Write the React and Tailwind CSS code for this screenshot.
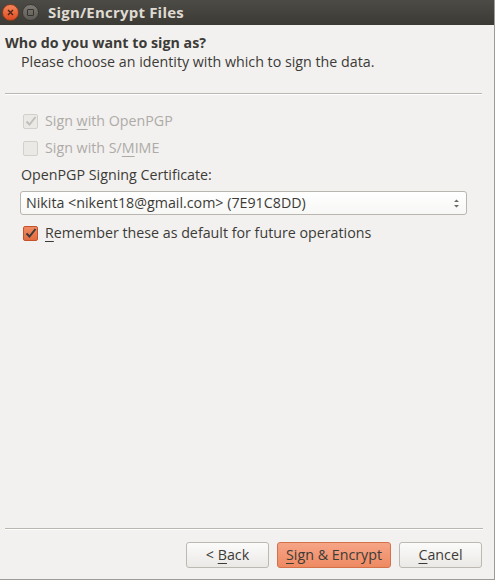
import React from 'react';

const U = ({ children }) => <span className="underline underline-offset-[3px] decoration-1">{children}</span>;

const Check = ({ checked, disabled, orange }) => {
  if (orange) {
    return (
      <div className="w-[15px] h-[15px] rounded-[2px] border border-[#c4532c] bg-gradient-to-b from-[#f08a62] to-[#e16c40] flex items-center justify-center">
        <svg width="13" height="13" viewBox="0 0 13 13">
          <path d="M2.5 6.5 L5.5 9.5 L11.5 2" fill="none" stroke="#3c3b37" strokeWidth="2" />
        </svg>
      </div>
    );
  }
  return (
    <div className="w-[15px] h-[15px] rounded-[2px] border border-[#d3d0cb] bg-[#ebe9e6] flex items-center justify-center">
      {checked && (
        <svg width="13" height="13" viewBox="0 0 13 13">
          <path d="M2.5 6.5 L5.5 9.5 L11.5 2" fill="none" stroke="#c2bfba" strokeWidth="2" />
        </svg>
      )}
    </div>
  );
};

const Button = ({ children, primary, className }) => (
  <button
    className={`h-[26px] rounded-[3px] border text-[14.25px] ${
      primary
        ? 'border-[#d2714a] bg-gradient-to-b from-[#f6a487] to-[#ee8a62] text-[#3c3b37]'
        : 'border-[#bcb8b2] bg-gradient-to-b from-[#fbfbfa] to-[#ebe9e6] text-[#3c3b37]'
    } ${className}`}
  >
    {children}
  </button>
);

export default function App() {
  return (
    <div
      className="w-[495px] h-[580px] bg-[#f2f1f0] flex flex-col border-r border-b border-[#9e9b96] text-[#3c3b37]"
      style={{ fontFamily: '"Open Sans", "Noto Sans", sans-serif' }}
    >
      {/* title bar */}
      <div className="h-[25px] shrink-0 bg-gradient-to-b from-[#4d4b45] to-[#3b3a35] flex items-center pl-[2px]">
        <div className="w-[17px] h-[17px] rounded-full bg-gradient-to-b from-[#f5855a] to-[#dd4b1f] border border-[#8e3b1c] flex items-center justify-center">
          <svg width="7" height="7" viewBox="0 0 7 7">
            <path d="M1 1 L6 6 M6 1 L1 6" stroke="#4a2416" strokeWidth="1.4" />
          </svg>
        </div>
        <div className="ml-[3px] w-[17px] h-[17px] rounded-full bg-gradient-to-b from-[#7e7b74] to-[#5c5a54] border border-[#3a3934] flex items-center justify-center">
          <div className="w-[7px] h-[7px] border border-[#34332f] rounded-[1px]" />
        </div>
        <span className="ml-[9px] text-[15px] font-bold text-[#dfdbd2] tracking-[0.2px]">Sign/Encrypt Files</span>
      </div>

      {/* header */}
      <div className="px-[5px] pt-[9px] text-[14.25px]">
        <div className="font-bold leading-[18px]">Who do you want to sign as?</div>
        <div className="pl-[16px] leading-[18px] mt-[1px]">Please choose an identity with which to sign the data.</div>
      </div>
      <div className="ml-[5px] mr-[12px] mt-[22px] h-[2px] border-t border-[#bab6b0] border-b border-b-white" />

      {/* body */}
      <div className="flex-1 px-[20px] pt-[17px] text-[14.25px]">
        <div className="flex items-center gap-[7px] pl-[3px] h-[18px]">
          <Check checked disabled />
          <span className="text-[#aeaba6]">Sign <U>w</U>ith OpenPGP</span>
        </div>
        <div className="flex items-center gap-[7px] pl-[3px] h-[18px] mt-[9px]">
          <Check disabled />
          <span className="text-[#aeaba6]">Sign with S/<U>M</U>IME</span>
        </div>
        <div className="mt-[9px] pl-[1px] leading-[18px]">OpenPGP Signing Certificate:</div>
        <div className="mt-[7px] h-[24px] w-[447px] rounded-[3px] border border-[#b9b5af] bg-gradient-to-b from-white to-[#f7f7f6] flex items-center justify-between pl-[5px] pr-[6px]">
          <span>Nikita &lt;nikent18@gmail.com&gt; (7E91C8DD)</span>
          <svg width="7" height="11" viewBox="0 0 7 11">
            <path d="M1 4 L3.5 1.5 L6 4 Z M1 7 L3.5 9.5 L6 7 Z" fill="#6b6964" />
          </svg>
        </div>
        <div className="flex items-center gap-[7px] pl-[3px] h-[18px] mt-[9px]">
          <Check orange />
          <span><U>R</U>emember these as default for future operations</span>
        </div>
      </div>

      {/* footer */}
      <div className="ml-[5px] mr-[11px] h-[2px] border-t border-[#bab6b0] border-b border-b-white" />
      <div className="h-[49px] shrink-0 flex items-start justify-end gap-[8px] pr-[12px] pt-[12px]">
        <Button className="w-[83px]">&lt; <U>B</U>ack</Button>
        <Button primary className="w-[114px]"><U>S</U>ign &amp; Encrypt</Button>
        <Button className="w-[83px]"><U>C</U>ancel</Button>
      </div>
    </div>
  );
}
